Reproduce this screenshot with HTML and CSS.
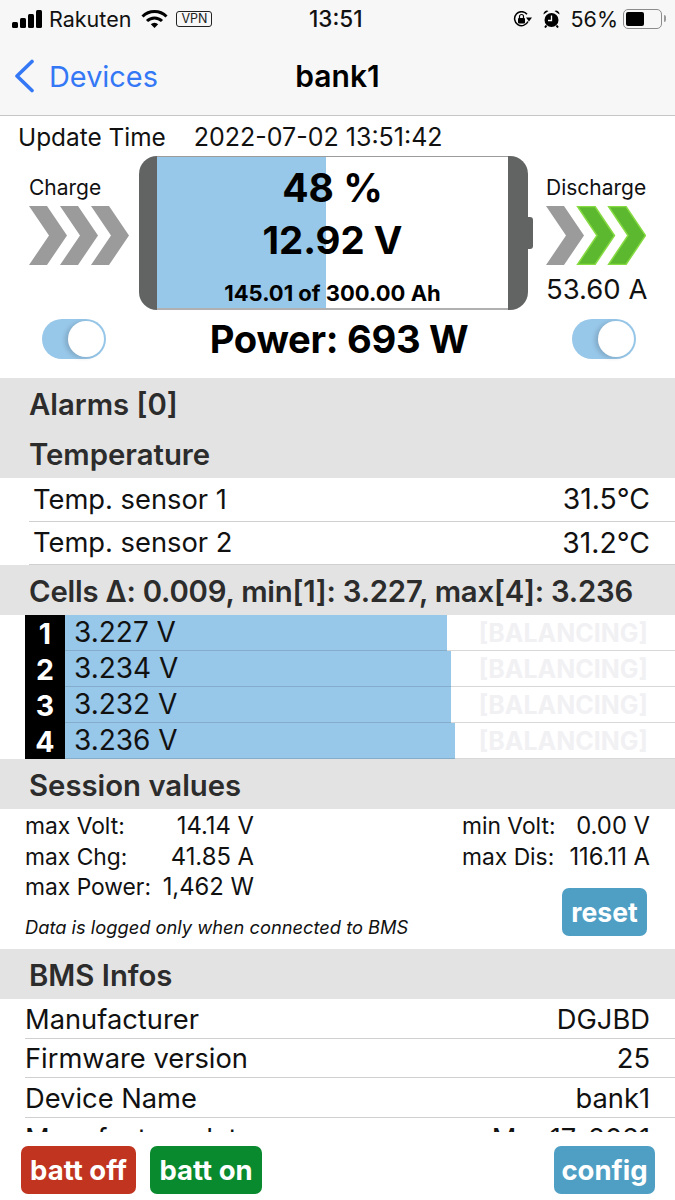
FILE: index.html
```html
<!DOCTYPE html>
<html lang="en">
<head>
    <meta charset="UTF-8">
    <meta name="viewport" content="width=device-width, initial-scale=1.0">
    <title>bank1</title>
    <link rel="stylesheet" href="styles.css">
</head>
<body>
    <div class="screen">
        <header class="topbar">
            <div class="status">
                <div class="status-left">
                    <svg class="signal" width="30" height="18" viewBox="0 0 30 18"><rect x="0" y="12" width="6" height="6" rx="1.500"/><rect x="8" y="8" width="6" height="10" rx="1.500"/><rect x="16" y="4" width="6" height="14" rx="1.500"/><rect x="24" y="0" width="6" height="18" rx="1.500"/></svg>
                    <span class="carrier">Rakuten</span>
                    <svg class="wifi" width="27" height="18" viewBox="0 0 27 18"><path d="M1.500 6.500a17 17 0 0 1 24 0" fill="none" stroke="#000" stroke-width="3"/><path d="M6 11a10.600 10.600 0 0 1 15 0" fill="none" stroke="#000" stroke-width="3"/><path d="M9.800 14.200a5.200 5.200 0 0 1 7.400 0L13.500 18z"/></svg>
                    <span class="vpn">VPN</span>
                </div>
                <div class="clock">13:51</div>
                <div class="status-right">
                    <svg class="lock" width="19" height="16" viewBox="0 0 19 16"><path d="M15 10.500A7 7 0 1 1 14 3.200" fill="none" stroke="#000" stroke-width="1.500"/><path d="M13 6.500h6l-3 4z"/><rect x="5" y="7" width="7" height="5.500" rx="1"/><path d="M6.500 7V5.500a2 2 0 0 1 4 0V7" fill="none" stroke="#000" stroke-width="1.200"/></svg>
                    <svg class="alarm" width="17" height="18" viewBox="0 0 17 18"><circle cx="8.500" cy="10" r="7"/><path d="M0.500 4.500a3.500 3.500 0 0 1 5-3.500zM16.500 4.500a3.500 3.500 0 0 0-5-3.500z"/><path d="M8.500 5.500V10.500H5" fill="none" stroke="#fff" stroke-width="1.300"/><path d="M3.500 15.500l-1.500 2M13.500 15.500l1.500 2" stroke="#000" stroke-width="2"/></svg>
                    <span class="percent">56%</span>
                    <div class="batt-icon"><div class="batt-level"></div></div>
                    <div class="batt-tip"></div>
                </div>
            </div>
            <nav class="navbar">
                <a class="back">
                    <svg width="22" height="34" viewBox="0 0 22 34"><path d="M19 2.500 4 17l15 14.500" fill="none" stroke="#3478f6" stroke-width="3.600" stroke-linecap="round" stroke-linejoin="round"/></svg>
                    <span>Devices</span>
                </a>
                <div class="nav-title">bank1</div>
            </nav>
        </header>

        <main class="content">
            <div class="update-row"><span>Update Time</span><span class="update-date">2022-07-02 13:51:42</span></div>

            <div class="battery-row">
                <div class="flow-col">
                    <div class="flow-label">Charge</div>
                    <svg class="chevrons" width="100" height="59" viewBox="0 0 100 59">
                        <polygon class="off" points="0,0 18,0 38,29.500 18,59 0,59 20,29.500"/>
                        <polygon class="off" points="31,0 49,0 69,29.500 49,59 31,59 51,29.500"/>
                        <polygon class="off" points="62,0 80,0 100,29.500 80,59 62,59 82,29.500"/>
                    </svg>
                </div>
                <div class="battery">
                    <div class="cap cap-left"></div>
                    <div class="batt-body">
                        <div class="batt-fill"></div>
                        <div class="batt-pct">48 %</div>
                        <div class="batt-volt">12.92 V</div>
                        <div class="batt-ah">145.01 of 300.00 Ah</div>
                    </div>
                    <div class="cap cap-right"></div>
                    <div class="nub"></div>
                </div>
                <div class="flow-col">
                    <div class="flow-label">Discharge</div>
                    <svg class="chevrons" width="100" height="59" viewBox="0 0 100 59">
                        <polygon class="off" points="0,0 18,0 38,29.500 18,59 0,59 20,29.500"/>
                        <polygon class="on" points="31.500,0.500 49,0.500 68.500,29.500 49,58.500 31.500,58.500 51,29.500"/>
                        <polygon class="on" points="62.500,0.500 80,0.500 99.500,29.500 80,58.500 62.500,58.500 82,29.500"/>
                    </svg>
                    <div class="flow-amps">53.60 A</div>
                </div>
            </div>

            <div class="power-row">
                <div class="switch"><div class="knob"></div></div>
                <div class="power">Power: 693 W</div>
                <div class="switch"><div class="knob"></div></div>
            </div>

            <h3 class="section">Alarms [0]</h3>
            <h3 class="section">Temperature</h3>
            <div class="temp-row"><span>Temp. sensor 1</span><span class="temp-val">31.5°C</span></div>
            <div class="temp-row"><span>Temp. sensor 2</span><span class="temp-val">31.2°C</span></div>

            <h3 class="section cells-head">Cells Δ: 0.009, min[1]: 3.227, max[4]: 3.236</h3>
            <div class="cell-row">
                <div class="cell-num">1</div>
                <div class="cell-track"><div class="cell-bar" style="width: 382px">3.227 V</div><span class="cell-bal">[BALANCING]</span></div>
            </div>
            <div class="cell-row">
                <div class="cell-num">2</div>
                <div class="cell-track"><div class="cell-bar" style="width: 386px">3.234 V</div><span class="cell-bal">[BALANCING]</span></div>
            </div>
            <div class="cell-row">
                <div class="cell-num">3</div>
                <div class="cell-track"><div class="cell-bar" style="width: 386px">3.232 V</div><span class="cell-bal">[BALANCING]</span></div>
            </div>
            <div class="cell-row">
                <div class="cell-num">4</div>
                <div class="cell-track"><div class="cell-bar" style="width: 390px">3.236 V</div><span class="cell-bal">[BALANCING]</span></div>
            </div>

            <h3 class="section">Session values</h3>
            <div class="session">
                <div class="session-left">
                    <div class="kv"><span>max Volt:</span><span class="val">14.14 V</span></div>
                    <div class="kv"><span>max Chg:</span><span class="val">41.85 A</span></div>
                    <div class="kv"><span>max Power:</span><span class="val">1,462 W</span></div>
                    <div class="note">Data is logged only when connected to BMS</div>
                </div>
                <div class="session-right">
                    <div class="kv"><span>min Volt:</span><span class="val">0.00 V</span></div>
                    <div class="kv"><span>max Dis:</span><span class="val">116.11 A</span></div>
                    <button class="btn btn-blue reset">reset</button>
                </div>
            </div>

            <h3 class="section">BMS Infos</h3>
            <div class="info-row"><span>Manufacturer</span><span>DGJBD</span></div>
            <div class="info-row"><span>Firmware version</span><span>25</span></div>
            <div class="info-row"><span>Device Name</span><span>bank1</span></div>
            <div class="info-row"><span>Manufacture date</span><span>Mar 17, 2021</span></div>
        </main>

        <footer class="toolbar">
            <button class="btn btn-red">batt off</button>
            <button class="btn btn-green">batt on</button>
            <button class="btn btn-blue config">config</button>
        </footer>
    </div>
</body>
</html>
```

FILE: styles.css
```css
/* Reset */
* {
    margin: 0;
    padding: 0;
    box-sizing: border-box;
}

body {
    font-family: 'Inter', 'Liberation Sans', sans-serif;
    background: #fff;
    color: #111;
}

.screen {
    width: 675px;
    height: 1200px;
    display: flex;
    flex-direction: column;
    overflow: hidden;
}

/* Status bar + nav */
.topbar {
    height: 116px;
    flex: none;
    background: #f7f7f7;
    border-bottom: 1px solid #c6c6c6;
}

.status {
    height: 37px;
    display: flex;
    align-items: center;
    position: relative;
    padding: 0 9px 0 12px;
    font-size: 21.500px;
    justify-content: space-between;
}

.status-left, .status-right {
    display: flex;
    align-items: center;
}

.signal { margin-right: 7px; }
.carrier { margin-right: 10px; }
.wifi { margin-right: 8px; }

.vpn {
    width: 36px;
    height: 16px;
    font-size: 12.500px;
    line-height: 13px;
    text-align: center;
    border: 1.500px solid #222;
    border-radius: 3px;
    color: #222;
}

.clock {
    position: absolute;
    left: 309px;
    font-weight: 500;
    font-size: 22.500px;
}

.lock { margin-right: 11px; }
.alarm { margin-right: 10px; }
.percent { margin-right: 5px; }

.batt-icon {
    width: 39px;
    height: 20px;
    border: 1.500px solid #8c8c8c;
    border-radius: 5px;
    padding: 2px;
}

.batt-level {
    width: 18px;
    height: 100%;
    background: #000;
    border-radius: 2px;
}

.batt-tip {
    width: 2px;
    height: 7px;
    background: #9a9a9a;
    border-radius: 0 2px 2px 0;
    margin-left: 2px;
}

.navbar {
    height: 78px;
    display: flex;
    align-items: center;
    position: relative;
    padding-left: 13px;
}

.back {
    display: flex;
    align-items: center;
    gap: 14px;
    color: #3478f6;
    font-size: 28.900px;
}

.nav-title {
    position: absolute;
    left: 0;
    right: 0;
    text-align: center;
    font-size: 30px;
    font-weight: 600;
    color: #000;
}

/* Scrolling part */
.content {
    flex: 1;
    overflow: hidden;
}

.update-row {
    height: 40px;
    display: flex;
    align-items: center;
    gap: 28px;
    padding: 2px 0 0 18px;
    font-size: 24.400px;
    color: #111;
}

.update-date { font-size: 25px; }

/* Battery */
.battery-row {
    display: flex;
    height: 154px;
}

.flow-col {
    width: 139px;
    padding-left: 29px;
}

.battery-row .flow-col:last-child {
    padding-left: 18px;
    width: 147px;
}

.flow-label {
    font-size: 21px;
    line-height: 24px;
    margin-top: 20px;
    margin-bottom: 6px;
    white-space: nowrap;
}

.chevrons { display: block; }
.chevrons .off { fill: #9b9b9b; }
.chevrons .on { fill: #5cb92f; stroke: #86da42; stroke-width: 1.500; }

.flow-amps {
    font-size: 27.500px;
    line-height: 30px;
    margin-top: 9px;
    white-space: nowrap;
}

.battery {
    width: 389px;
    display: flex;
    position: relative;
}

.cap {
    width: 18px;
    background: #626464;
}

.cap-left { border-radius: 18px 0 0 18px; }
.cap-right { width: 20px; border-radius: 0 18px 18px 0; }

.nub {
    position: absolute;
    right: -5px;
    top: 61px;
    width: 5px;
    height: 32px;
    background: #626464;
    border-radius: 0 3px 3px 0;
}

.batt-body {
    flex: 1;
    position: relative;
    border-top: 1px solid #9c9c9c;
    border-bottom: 2px solid #b0b0b0;
    text-align: center;
    font-weight: 700;
    color: #000;
}

.batt-fill {
    position: absolute;
    left: 0;
    top: 0;
    bottom: 0;
    width: 169px;
    background: #97c7e9;
}

.batt-pct, .batt-volt, .batt-ah {
    position: relative;
}

.batt-pct { font-size: 39px; line-height: 44px; margin-top: 9px; }
.batt-volt { font-size: 38.400px; line-height: 44px; margin-top: 8px; }
.batt-ah { font-size: 22px; line-height: 24px; margin-top: 19px; white-space: nowrap; }

/* Power row */
.power-row {
    height: 68px;
    display: flex;
    align-items: center;
    padding: 0 39px 10px 42px;
    justify-content: space-between;
}

.power {
    font-size: 38.200px;
    font-weight: 700;
    color: #000;
    letter-spacing: -0.3px;
}

.switch {
    width: 64px;
    height: 40px;
    background: #97c7e9;
    border-radius: 20px;
    position: relative;
}

.knob {
    position: absolute;
    right: 2px;
    top: 2px;
    width: 36px;
    height: 36px;
    border-radius: 50%;
    background: #fff;
    box-shadow: -3px 1px 4px rgba(0, 0, 0, 0.15);
}

/* Section headers */
.section {
    height: 50px;
    background: #e3e3e3;
    display: flex;
    align-items: center;
    padding: 2px 0 0 29px;
    font-size: 29.300px;
    font-weight: 600;
    color: #2c2c2c;
    white-space: nowrap;
}

.cells-head { letter-spacing: -0.2px; }

/* Temperature rows */
.temp-row {
    height: 43.500px;
    margin-left: 29px;
    padding: 0 25px 0 4px;
    display: flex;
    align-items: center;
    justify-content: space-between;
    font-size: 27.300px;
    border-bottom: 1px solid #d0d0d0;
    white-space: nowrap;
}

.temp-val { font-size: 28.300px; }

/* Cells */
.cell-row {
    height: 36px;
    display: flex;
    margin-left: 25px;
}

.cell-num {
    width: 40px;
    background: #000;
    color: #fff;
    font-size: 28.500px;
    font-weight: 700;
    text-align: center;
    line-height: 37px;
}

.cell-track {
    flex: 1;
    position: relative;
    border-bottom: 1px solid #d8d8d8;
}

.cell-bar {
    height: 36px;
    background: #97c7e9;
    border-bottom: 1px solid #83adcb;
    padding-left: 9px;
    font-size: 28px;
    line-height: 35px;
    color: #111;
}

.cell-bal {
    position: absolute;
    right: 27px;
    top: 0;
    line-height: 36px;
    font-size: 25px;
    font-weight: 700;
    color: #f1f1f4;
}

/* Session values */
.session {
    height: 140px;
    display: flex;
    justify-content: space-between;
    padding: 2px 25px 0 25px;
    font-size: 22.800px;
}

.session-left { width: 229px; }
.session-right { width: 188px; }

.kv {
    height: 30.500px;
    line-height: 30.500px;
    display: flex;
    justify-content: space-between;
    white-space: nowrap;
}

.val { font-size: 23.800px; }

.note {
    font-size: 18.300px;
    font-style: italic;
    margin-top: 13px;
    white-space: nowrap;
}

.btn {
    border: none;
    border-radius: 7px;
    color: #fff;
    font-family: 'Inter', 'Liberation Sans', sans-serif;
    font-size: 27.500px;
    font-weight: 700;
    height: 48px;
}

.btn-blue { background: #4f9fc5; }
.btn-red { background: #c03420; width: 115px; }
.btn-green { background: #0a8a2e; width: 112px; margin-left: 14px; }

.reset {
    display: block;
    width: 85px;
    font-size: 26.500px;
    margin: 16px 3px 0 auto;
}

/* BMS info */
.info-row {
    height: 39.600px;
    margin-left: 25px;
    padding: 2px 25px 0 0;
    display: flex;
    align-items: center;
    justify-content: space-between;
    font-size: 27.300px;
    border-bottom: 1px solid #d0d0d0;
    white-space: nowrap;
}

/* Bottom bar */
.toolbar {
    height: 68px;
    flex: none;
    background: #fff;
    display: flex;
    padding: 14px 20px 0 21px;
}

.config {
    width: 101px;
    margin-left: auto;
}
```
